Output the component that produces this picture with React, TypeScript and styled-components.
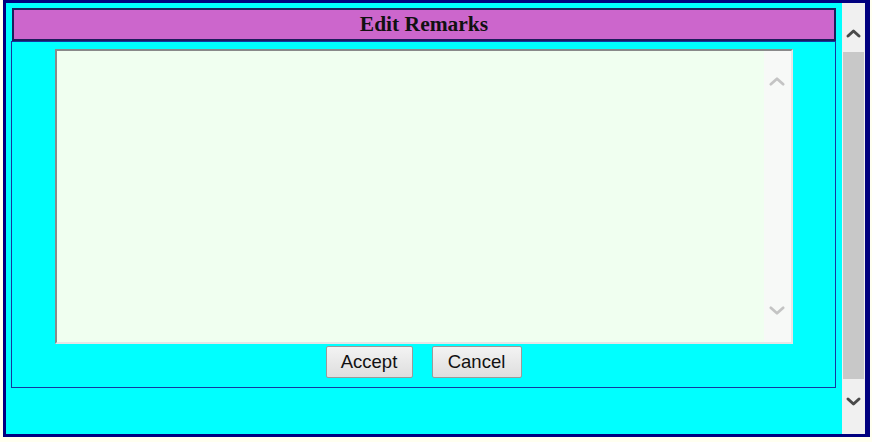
import React from "react";
import styled, { createGlobalStyle } from "styled-components";

const Global = createGlobalStyle`
  html, body { margin: 0; padding: 0; background: #fffff0; }
  body { font-family: "Liberation Serif", "Times New Roman", serif; }
  * { box-sizing: border-box; }
`;

const Frame = styled.div`
  margin-left: 3px;
  width: 867px;
  height: 437px;
  border: 3px solid #00007f;
  border-right-width: 5px;
  display: flex;
  background: #00ffff;
`;

const Content = styled.div`
  flex: 1;
  padding: 5px 6px 0 5px;
  display: flex;
  flex-direction: column;
`;

const Header = styled.div`
  margin-left: 1px;
  height: 33px;
  border: 2px solid #1c1c5c;
  background: #cc66cc;
  display: flex;
  align-items: center;
  justify-content: center;
  font-family: "Liberation Serif", "Times New Roman", serif;
  font-weight: bold;
  font-size: 21.5px;
  color: #111;
`;

const Body = styled.div`
  height: 347px;
  border: 1px solid #1537a0;
  display: flex;
  flex-direction: column;
  align-items: center;
  padding-top: 7px;
`;

const Field = styled.div`
  width: 738px;
  height: 295px;
  border-style: solid;
  border-width: 2px;
  border-color: #8a8a8a #e6e6e6 #e6e6e6 #8a8a8a;
  background: #f0fff0;
  display: flex;
`;

const Input = styled.textarea`
  flex: 1;
  border: none;
  outline: none;
  resize: none;
  overflow: hidden;
  background: transparent;
  font-family: "Liberation Mono", monospace;
  font-size: 13px;
  padding: 2px;
`;

const FieldBar = styled.div`
  width: 27px;
  background: #f7f9f7;
  display: flex;
  flex-direction: column;
  justify-content: space-between;
  align-items: center;
  padding: 25px 0 26px;
`;

const Actions = styled.div`
  display: flex;
  gap: 19px;
  margin-top: 2px;
`;

const Button = styled.button<{ $w: number }>`
  width: ${(p) => p.$w}px;
  height: 32px;
  border: 1px solid #9a9a9a;
  border-radius: 2px;
  background: linear-gradient(#f3f3f3, #dedede);
  font-family: "Liberation Sans", Arial, sans-serif;
  font-size: 18.5px;
  color: #111;
  padding: 0;
`;

const ScrollBar = styled.div`
  width: 23px;
  background: #f0f0f0;
  display: flex;
  flex-direction: column;
`;

const ArrowCell = styled.div<{ $h: number; $pad: string }>`
  height: ${(p) => p.$h}px;
  display: flex;
  justify-content: center;
  padding: ${(p) => p.$pad};
`;

const Thumb = styled.div`
  flex: 1;
  margin: 0 1px;
  background: #c8c8c8;
`;

const Chevron = ({ up, color, w, h, sw }: { up: boolean; color: string; w: number; h: number; sw: number }) => (
  <svg width={w} height={h} viewBox={`0 0 ${w} ${h}`}>
    <polyline
      points={up ? `${sw},${h - sw} ${w / 2},${sw} ${w - sw},${h - sw}` : `${sw},${sw} ${w / 2},${h - sw} ${w - sw},${sw}`}
      fill="none"
      stroke={color}
      strokeWidth={sw}
      strokeLinecap="round"
      strokeLinejoin="round"
    />
  </svg>
);

export default function App() {
  return (
    <>
      <Global />
      <Frame>
        <Content>
          <Header>Edit Remarks</Header>
          <Body>
            <Field>
              <Input defaultValue="" />
              <FieldBar>
                <Chevron up color="#c4c4c4" w={18} h={11} sw={2.8} />
                <Chevron up={false} color="#c4c4c4" w={18} h={11} sw={2.8} />
              </FieldBar>
            </Field>
            <Actions>
              <Button $w={87}>Accept</Button>
              <Button $w={90}>Cancel</Button>
            </Actions>
          </Body>
        </Content>
        <ScrollBar>
          <ArrowCell $h={49} $pad="25px 0 0">
            <Chevron up color="#4a4a4a" w={17} h={11} sw={3} />
          </ArrowCell>
          <Thumb />
          <ArrowCell $h={55} $pad="17px 0 0">
            <Chevron up={false} color="#4a4a4a" w={17} h={11} sw={3} />
          </ArrowCell>
        </ScrollBar>
      </Frame>
    </>
  );
}
